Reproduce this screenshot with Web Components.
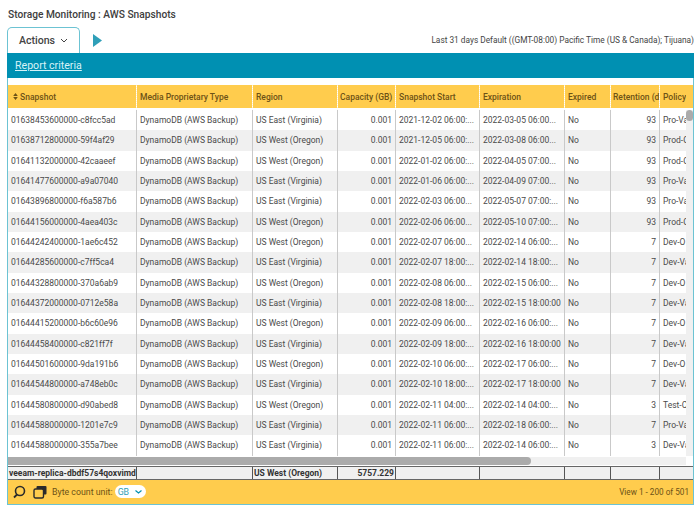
<!DOCTYPE html>
<html lang="en">
<head>
<meta charset="utf-8">
<title>AWS Snapshots</title>
<style>
  html, body { margin: 0; background: #fff; }
  body { font-family: Roboto, "Liberation Sans", sans-serif; color: #444; }
</style>
</head>
<body>
<report-page>
  <report-title slot="title">Storage Monitoring : AWS Snapshots</report-title>
  <report-toolbar slot="toolbar" range="Last 31 days Default ((GMT-08:00) Pacific Time (US &amp; Canada); Tijuana)"></report-toolbar>
  <criteria-bar slot="criteria">Report criteria</criteria-bar>
  <snapshot-grid slot="grid"></snapshot-grid>
  <grid-status slot="status" unit="GB">View 1 - 200 of 501</grid-status>
</report-page>

<script>
const COLUMNS = [
  { title: "Snapshot", width: 129, sort: true },
  { title: "Media Proprietary Type", width: 116 },
  { title: "Region", width: 85 },
  { title: "Capacity (GB)", width: 58, num: true },
  { title: "Snapshot Start", width: 84 },
  { title: "Expiration", width: 85 },
  { title: "Expired", width: 46 },
  { title: "Retention (d", width: 49, num: true },
  { title: "Policy", width: 26 },
];

const E = "US East (Virginia)";
const W = "US West (Oregon)";
const ROWS = [
  ["01638453600000-c8fcc5ad", E, "2021-12-02 06:00:...", "2022-03-05 06:00...", "93", "Pro-Va"],
  ["01638712800000-59f4af29", W, "2021-12-05 06:00:...", "2022-03-08 06:00...", "93", "Prod-C"],
  ["01641132000000-42caaeef", W, "2022-01-02 06:00:...", "2022-04-05 07:00...", "93", "Prod-C"],
  ["01641477600000-a9a07040", E, "2022-01-06 06:00:...", "2022-04-09 07:00...", "93", "Pro-Va"],
  ["01643896800000-f6a587b6", E, "2022-02-03 06:00...", "2022-05-07 07:00:...", "93", "Pro-Va"],
  ["01644156000000-4aea403c", W, "2022-02-06 06:00...", "2022-05-10 07:00:...", "93", "Prod-C"],
  ["01644242400000-1ae6c452", W, "2022-02-07 06:00...", "2022-02-14 06:00:...", "7", "Dev-O"],
  ["01644285600000-c7ff5ca4", E, "2022-02-07 18:00:...", "2022-02-14 18:00:...", "7", "Dev-Va"],
  ["01644328800000-370a6ab9", W, "2022-02-08 06:00...", "2022-02-15 06:00:...", "7", "Dev-O"],
  ["01644372000000-0712e58a", E, "2022-02-08 18:00:...", "2022-02-15 18:00:00", "7", "Dev-Va"],
  ["01644415200000-b6c60e96", W, "2022-02-09 06:00...", "2022-02-16 06:00:...", "7", "Dev-O"],
  ["01644458400000-c821ff7f", E, "2022-02-09 18:00:...", "2022-02-16 18:00:00", "7", "Dev-Va"],
  ["01644501600000-9da191b6", W, "2022-02-10 06:00:...", "2022-02-17 06:00:...", "7", "Dev-O"],
  ["01644544800000-a748eb0c", E, "2022-02-10 18:00:...", "2022-02-17 18:00:00", "7", "Dev-Va"],
  ["01644580800000-d90abed8", W, "2022-02-11 04:00:...", "2022-02-14 04:00:...", "3", "Test-C"],
  ["01644588000000-1201e7c9", E, "2022-02-11 06:00:...", "2022-02-18 06:00:...", "7", "Pro-Va"],
  ["01644588000000-355a7bee", E, "2022-02-11 06:00:...", "2022-02-14 06:00:...", "3", "Dev-Va"],
];

class ReportPage extends HTMLElement {
  constructor() {
    super();
    this.attachShadow({ mode: "open" });
    this.shadowRoot.innerHTML = `
      <style>
        :host { display: block; width: 700px; height: 518px; padding: 9px 6px 0 7px; box-sizing: border-box; }
        .panel { border: 1px solid #6cc3d3; border-top: 0; }
      </style>
      <slot name="title"></slot>
      <slot name="toolbar"></slot>
      <div class="panel">
        <slot name="criteria"></slot>
        <slot name="grid"></slot>
        <slot name="status"></slot>
      </div>
    `;
  }
}

class ReportTitle extends HTMLElement {
  constructor() {
    super();
    this.attachShadow({ mode: "open" });
    this.shadowRoot.innerHTML = `
      <style>
        :host { display: block; height: 18px; padding-left: 1px; font-size: 10.2px; line-height: 12px; font-weight: 500; color: #3d3d3d; }
      </style>
      <slot></slot>
    `;
  }
}

class ReportToolbar extends HTMLElement {
  constructor() {
    super();
    this.attachShadow({ mode: "open" });
  }

  connectedCallback() {
    this.shadowRoot.innerHTML = `
      <style>
        :host { display: flex; align-items: flex-end; height: 26px; }
        .tab {
          box-sizing: border-box; width: 73px; height: 26px;
          display: flex; align-items: center; justify-content: center; gap: 5px;
          border: 1px solid #6cc3d3; border-bottom: 0; border-radius: 5px 5px 0 0;
          font-size: 10.6px; color: #444; font-weight: 500;
        }
        .run { margin-left: 13px; align-self: center; display: block; }
        .range { margin-left: auto; align-self: center; font-size: 8.3px; color: #444; }
      </style>
      <div class="tab">Actions
        <svg width="8" height="5" viewBox="0 0 8 5"><path d="M1 1l3 3 3-3" fill="none" stroke="#444" stroke-width="1"/></svg>
      </div>
      <svg class="run" width="9" height="13" viewBox="0 0 9 13"><path d="M0 0l9 6.500-9 6.500z" fill="#2f9fb8"/></svg>
      <div class="range">${this.getAttribute("range")}</div>
    `;
  }
}

class CriteriaBar extends HTMLElement {
  constructor() {
    super();
    this.attachShadow({ mode: "open" });
    this.shadowRoot.innerHTML = `
      <style>
        :host { display: block; height: 25px; margin-left: -1px; margin-right: -1px; padding-left: 8px; background: #0090b2; font-size: 10.6px; line-height: 25px; color: #d8f3f8; text-decoration: underline; }
      </style>
      <slot></slot>
    `;
  }
}

class SnapshotGrid extends HTMLElement {
  constructor() {
    super();
    this.attachShadow({ mode: "open" });
  }

  connectedCallback() {
    const cols = COLUMNS.map((c) => `<col style="width:${c.width}px">`).join("");
    const head = COLUMNS.map((c) => `
      <th class="${c.num ? "cap" : ""}">${c.sort ? '<svg width="5" height="7" viewBox="0 0 5 7"><path d="M2.500 0l2.300 3h-4.600zM2.500 7l2.300-3h-4.600z" fill="#6d5216"/></svg> ' : ""}${c.title}</th>`).join("");
    const body = ROWS.map((r) => `
      <tr>
        <td>${r[0]}</td><td>DynamoDB (AWS Backup)</td><td>${r[1]}</td>
        <td class="num">0.001</td><td>${r[2]}</td><td>${r[3]}</td><td>No</td>
        <td class="num">${r[4]}</td><td class="clip">${r[5]}</td>
      </tr>`).join("");
    this.shadowRoot.innerHTML = `
      <style>
        :host { display: block; padding-top: 7px; font-size: 8.5px; color: #4a4a4a; }
        table { border-collapse: separate; border-spacing: 0; table-layout: fixed; width: 678px; }
        th, td { box-sizing: border-box; overflow: hidden; white-space: nowrap; text-align: left; }
        th { height: 25px; padding: 0 3px; background: #ffcc4d; background-clip: padding-box; color: #6d5216; font-weight: 500; font-size: 8.5px; border-right: 1px dotted #fff2cf; border-bottom: 2px solid #fff; }
        th.cap { padding: 0 2px; }
        th:first-child { padding-left: 5px; }
        td { height: 20.330px; padding: 0 3px; border-right: 1px solid #c9c9c9; }
        td:last-child, th:last-child { border-right: 0; }
        td.num { text-align: right; }
        tbody tr:nth-child(even) td { background: #f0f0f0; }
        .body { display: flex; }
        .side { width: 7px; display: flex; flex-direction: column; }
        .head-end { height: 23px; margin-bottom: 2px; background: #ffcc4d; }
        .vtrack { flex: 1; background: #f0f0f0; }
        .vthumb { height: 11px; background: #ababab; border-radius: 4px; }
        .htrack { width: 678px; height: 8px; margin-top: 1px; background: #f0f0f0; }
        .hthumb { width: 523px; height: 8px; background: #ababab; border-radius: 0 4px 4px 0; }
        .totals { display: grid; grid-template-columns: 129px 116px 85px 58px 84px 85px 46px 49px 1fr; height: 14px; margin-top: 1px; background: #f0f0f0; border-top: 1px solid #666; border-bottom: 1px solid #666; box-sizing: border-box; }
        .totals div { border-right: 1px solid #555; font-weight: 700; color: #333; line-height: 12px; overflow: hidden; white-space: nowrap; padding-left: 1px; }
        .totals div:last-child { border-right: 0; }
        .totals .num { text-align: right; padding-right: 1px; }
      </style>
      <div class="body">
        <table>
          <colgroup>${cols}</colgroup>
          <thead><tr>${head}</tr></thead>
          <tbody>${body}</tbody>
        </table>
        <div class="side">
          <div class="head-end"></div>
          <div class="vtrack"><div class="vthumb"></div></div>
        </div>
      </div>
      <div class="htrack"><div class="hthumb"></div></div>
      <div class="totals">
        <div>veeam-replica-dbdf57s4qoxvimd</div><div></div><div>US West (Oregon)</div>
        <div class="num">5757.229</div><div></div><div></div><div></div><div></div><div></div>
      </div>
    `;
  }
}

class GridStatus extends HTMLElement {
  constructor() {
    super();
    this.attachShadow({ mode: "open" });
  }

  connectedCallback() {
    this.shadowRoot.innerHTML = `
      <style>
        :host { display: flex; align-items: center; height: 24px; padding: 0 4px 0 4px; background: #ffcc4d; font-size: 8.8px; color: #6d5216; }
        svg { display: block; }
        .unit { margin-left: 5px; }
        .select { margin-left: 2px; width: 31px; height: 13px; box-sizing: border-box; padding: 0 4px 0 3px; display: flex; align-items: center; justify-content: space-between; background: #fff; border-radius: 7px; color: #2f9fb8; }
        .view { margin-left: auto; font-size: 8.2px; }
      </style>
      <svg width="14" height="14" viewBox="0 0 14 14"><circle cx="8" cy="6" r="4.500" fill="none" stroke="#2b2b2b" stroke-width="1.600"/><path d="M5 9.500L2 12.500" stroke="#2b2b2b" stroke-width="1.800"/></svg>
      <svg style="margin-left:7px" width="14" height="14" viewBox="0 0 14 14"><rect x="3.500" y="1" width="10" height="8.500" rx="1" fill="#2b2b2b"/><rect x="1" y="4" width="9.500" height="9" rx="1.500" fill="#ffcc4d" stroke="#2b2b2b" stroke-width="1.400"/></svg>
      <span class="unit">Byte count unit:</span>
      <span class="select">${this.getAttribute("unit")}<svg width="7" height="4" viewBox="0 0 7 4"><path d="M.5.500l3 2.500 3-2.500" fill="none" stroke="#0090b2" stroke-width="1.200"/></svg></span>
      <span class="view"><slot></slot></span>
    `;
  }
}

customElements.define("report-page", ReportPage);
customElements.define("report-title", ReportTitle);
customElements.define("report-toolbar", ReportToolbar);
customElements.define("criteria-bar", CriteriaBar);
customElements.define("snapshot-grid", SnapshotGrid);
customElements.define("grid-status", GridStatus);
</script>
</body>
</html>
